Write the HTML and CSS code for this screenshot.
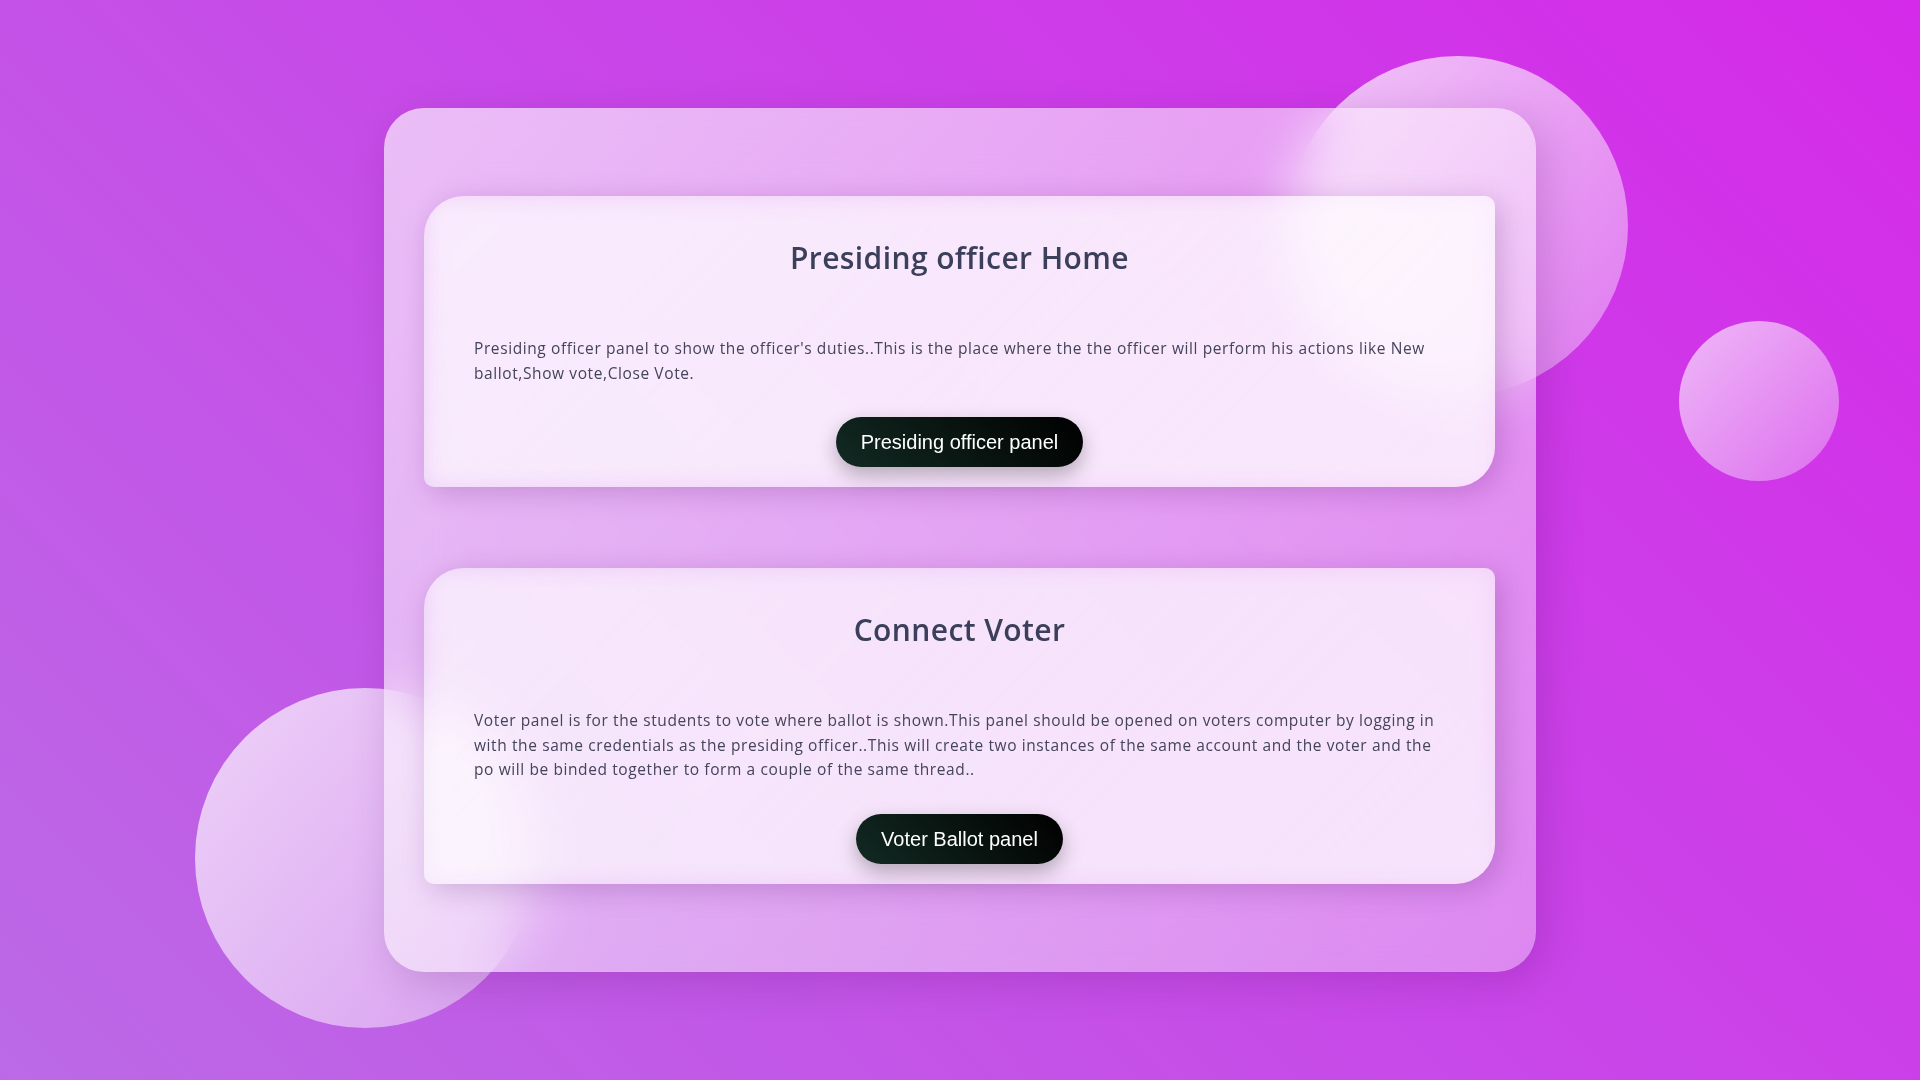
FILE: index.html
```html
<!DOCTYPE html>
<html lang="en">
<head>
<meta charset="utf-8">
<title>Presiding officer Home</title>
<link rel="stylesheet" href="styles.css">
</head>
<body>
  <div class="circle circle-top"></div>
  <div class="circle circle-small"></div>
  <div class="circle circle-bottom"></div>

  <main class="glass">
    <section class="card">
      <h2 class="card-title">Presiding officer Home</h2>
      <p class="card-text">Presiding officer panel to show the officer's duties..This is the place where the the officer will perform his actions like New ballot,Show vote,Close Vote.</p>
      <button class="pill-btn" type="button">Presiding officer panel</button>
    </section>

    <section class="card">
      <h2 class="card-title">Connect Voter</h2>
      <p class="card-text">Voter panel is for the students to vote where ballot is shown.This panel should be opened on voters computer by logging in with the same credentials as the presiding officer..This will create two instances of the same account and the voter and the po will be binded together to form a couple of the same thread..</p>
      <button class="pill-btn" type="button">Voter Ballot panel</button>
    </section>
  </main>
</body>
</html>
```
FILE: styles.css
```css
html, body {
  margin: 0;
  height: 100%;
}

body {
  position: relative;
  overflow: hidden;
  display: flex;
  align-items: center;
  justify-content: center;
  background: linear-gradient(45deg, #bb6ae6 0%, #c848e8 50%, #d52ae9 100%);
  font-family: "Open Sans", "Liberation Sans", sans-serif;
}

.circle {
  position: absolute;
  border-radius: 50%;
  z-index: 0;
}

.circle-top {
  left: 1288px;
  top: 56px;
  width: 340px;
  height: 340px;
  background: linear-gradient(135deg, rgba(255,255,255,0.72), rgba(255,255,255,0.32));
}

.circle-small {
  left: 1679px;
  top: 321px;
  width: 160px;
  height: 160px;
  background: linear-gradient(135deg, rgba(255,255,255,0.65), rgba(255,255,255,0.28));
}

.circle-bottom {
  left: 195px;
  top: 688px;
  width: 340px;
  height: 340px;
  background: linear-gradient(135deg, rgba(255,255,255,0.72), rgba(255,255,255,0.4));
}

.glass {
  position: relative;
  z-index: 1;
  box-sizing: border-box;
  width: 1152px;
  height: 864px;
  padding: 88px 41px 0 40px;
  border-radius: 40px;
  display: flex;
  flex-direction: column;
  gap: 81px;
  background: linear-gradient(135deg, rgba(255,255,255,0.64), rgba(255,255,255,0.36));
  backdrop-filter: blur(28px);
  -webkit-backdrop-filter: blur(28px);
  box-shadow: 8px 10px 40px rgba(70, 0, 90, 0.18);
}

.card {
  border-radius: 40px 10px;
  padding: 38px 50px 20px;
  text-align: center;
  background: linear-gradient(135deg, rgba(255,255,255,0.28), rgba(255,255,255,0.64));
  box-shadow: 6px 6px 28px rgba(80, 20, 100, 0.22);
  backdrop-filter: blur(12px);
  -webkit-backdrop-filter: blur(12px);
}

.card-title {
  margin: 0;
  font-size: 30px;
  font-weight: 600;
  letter-spacing: 0.4px;
  line-height: 48px;
  color: #3b3f5a;
}

.card-text {
  margin: 54px 0 32px;
  font-size: 15.5px;
  letter-spacing: 0.6px;
  line-height: 24.5px;
  text-align: left;
  color: #44445a;
}

.pill-btn {
  display: inline-block;
  border: 0;
  border-radius: 30px;
  padding: 13px 25px;
  font-family: "Liberation Sans", Arial, sans-serif;
  font-size: 20px;
  line-height: 24px;
  color: #fff;
  background: linear-gradient(45deg, #122a23, #000);
  box-shadow: 0 8px 20px rgba(0, 0, 0, 0.28);
  cursor: pointer;
}
```
